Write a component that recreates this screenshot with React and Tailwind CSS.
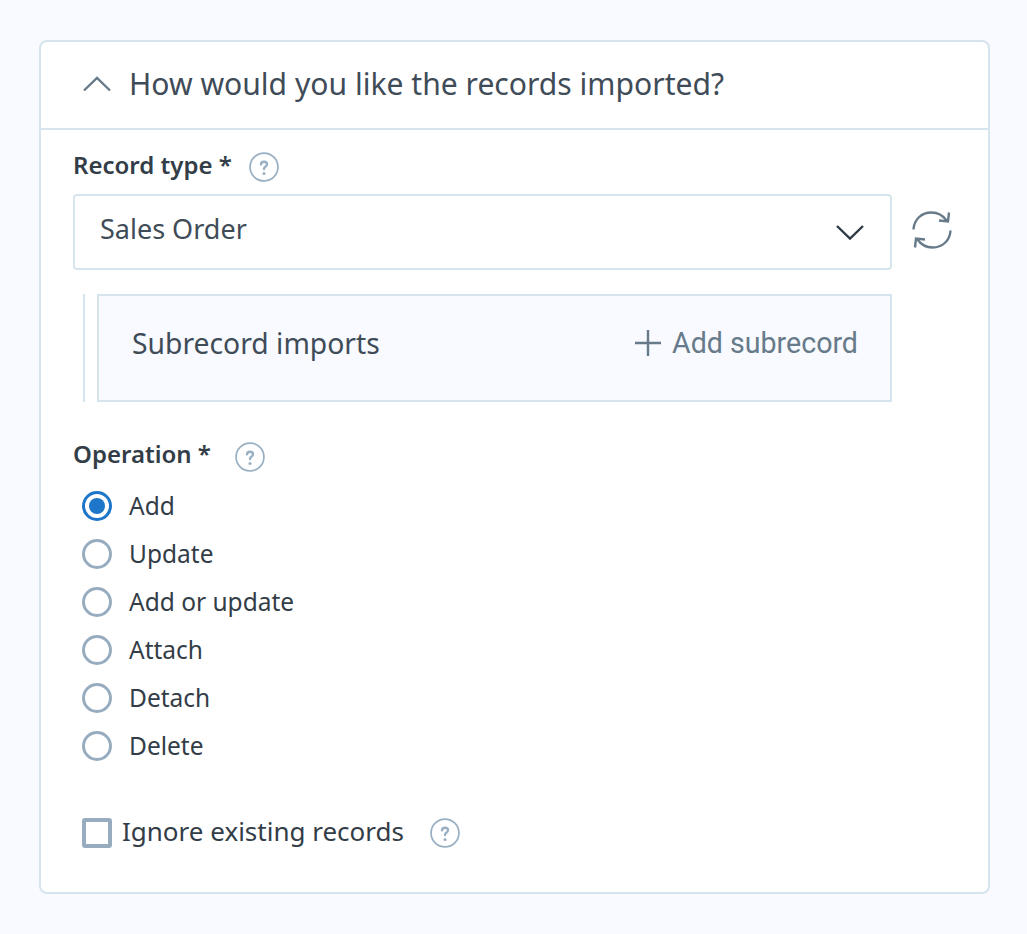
const help = "M11.2 11.6c.1-1.5 1.2-2.5 2.8-2.5 1.6 0 2.8 1 2.8 2.4 0 1.1-.6 1.7-1.5 2.3-.9.6-1.3 1.1-1.3 2.1";

function Help({ className = "" }) {
  return (
    <svg width="30" height="30" viewBox="0 0 28 28" fill="none" className={className}>
      <circle cx="14" cy="14" r="13" stroke="#99afc2" strokeWidth="1.6" />
      <path d={help} stroke="#99afc2" strokeWidth="2.2" strokeLinecap="round" />
      <circle cx="14" cy="20" r="1.4" fill="#99afc2" />
    </svg>
  );
}

function Radio({ label, checked }) {
  return (
    <div className="flex h-[48px] items-center">
      <span
        className={
          checked
            ? "flex h-[30px] w-[30px] items-center justify-center rounded-full border-[3px] border-[#1d76c9] bg-white"
            : "flex h-[30px] w-[30px] items-center justify-center rounded-full border-[3px] border-[#97adbf] bg-white"
        }
      >
        {checked && <span className="h-[16px] w-[16px] rounded-full bg-[#1d76c9]" />}
      </span>
      <span className="ml-[17px] text-[24.5px] leading-[32px] text-[#333d47]">{label}</span>
    </div>
  );
}

export default function App() {
  return (
    <div className="min-h-[934px] bg-[#f8faff] pt-[40px] pl-[39px] pr-[37px] font-['Noto_Sans','Open_Sans',sans-serif]">
      <div className="h-[854px] rounded-[8px] border-2 border-[#d6e4ed] bg-white">
        <div className="flex h-[88px] items-center border-b-2 border-[#d6e4ed] pl-[41px]">
          <svg width="30" height="18" viewBox="0 0 30 18" fill="none" className="mb-[2px]">
            <path d="M2 15.500 15 3l13 12.500" stroke="#677a89" strokeWidth="2.4" />
          </svg>
          <h1 className="mb-[3px] ml-[17px] text-[30.100px] leading-[40px] font-normal text-[#3f4c58]">
            How would you like the records imported?
          </h1>
        </div>

        <div className="pl-[32px] pr-[35px]">
          <div className="mt-[21px] flex h-[32px] items-center">
            <span className="mb-[4px] text-[24px] leading-[32px] font-semibold text-[#333d47]">Record type *</span>
            <Help className="ml-[17px]" />
          </div>

          <div className="mt-[11px] flex items-center">
            <div className="flex h-[76px] w-[819px] items-center justify-between rounded-[4px] border-2 border-[#d6e4ed] pr-[25px] pl-[25px]">
              <span className="mb-[7px] text-[27px] leading-[36px] text-[#3f4c58]">Sales Order</span>
              <svg width="30" height="18" viewBox="0 0 30 18" fill="none" className="mb-[1px]">
                <path d="M2 3l13 12.500L28 3" stroke="#2f3a44" strokeWidth="2.4" />
              </svg>
            </div>
            <svg width="42" height="42" viewBox="0 0 42 42" fill="none" className="mb-[4px] ml-[19px]">
              <path d="M2.500 20.500C3 10.500 10.500 3.500 20.500 3.500c6.500 0 11.500 3 15 8" stroke="#677a89" strokeWidth="2.4" />
              <path d="M39.500 21.500c-.5 10-8 17-18 17-6.500 0-11.500-3-15-8" stroke="#677a89" strokeWidth="2.4" />
              <path d="M38 3.500 37 12.500 28 11.500M4 38.500l1-9 9 1" stroke="#677a89" strokeWidth="2.4" />
            </svg>
          </div>

          <div className="mt-[24px] flex h-[108px] w-[819px] pl-[10px]">
            <div className="w-[2px] bg-[#d6e4ed]" />
            <div className="ml-[12px] flex flex-1 items-center justify-between border-2 border-[#d6e4ed] bg-[#f8faff] pr-[32px] pb-[10px] pl-[33px]">
              <span className="text-[28.300px] leading-[36px] text-[#3f4c58]">Subrecord imports</span>
              <div className="flex items-center">
                <svg width="28" height="28" viewBox="0 0 28 28" fill="none">
                  <path d="M14 1v26M1 14h26" stroke="#677a89" strokeWidth="2.4" />
                </svg>
                <span className="ml-[10px] font-['Roboto',sans-serif] text-[28.600px] leading-[36px] text-[#677a89]">Add subrecord</span>
              </div>
            </div>
          </div>

          <div className="mt-[39px] flex h-[32px] items-center">
            <span className="mb-[6px] text-[24px] leading-[32px] font-semibold text-[#333d47]">Operation *</span>
            <Help className="ml-[24px]" />
          </div>

          <div className="mt-[9px] pl-[9px]">
            <Radio label="Add" checked />
            <Radio label="Update" />
            <Radio label="Add or update" />
            <Radio label="Attach" />
            <Radio label="Detach" />
            <Radio label="Delete" />
          </div>

          <div className="mt-[47px] flex h-[32px] items-center pl-[9px]">
            <span className="h-[30px] w-[30px] rounded-[3px] border-[4px] border-[#97adbf] bg-white" />
            <span className="mb-[4px] ml-[10px] text-[26px] leading-[32px] text-[#333d47]">Ignore existing records</span>
            <Help className="ml-[26px]" />
          </div>
        </div>
      </div>
    </div>
  );
}
